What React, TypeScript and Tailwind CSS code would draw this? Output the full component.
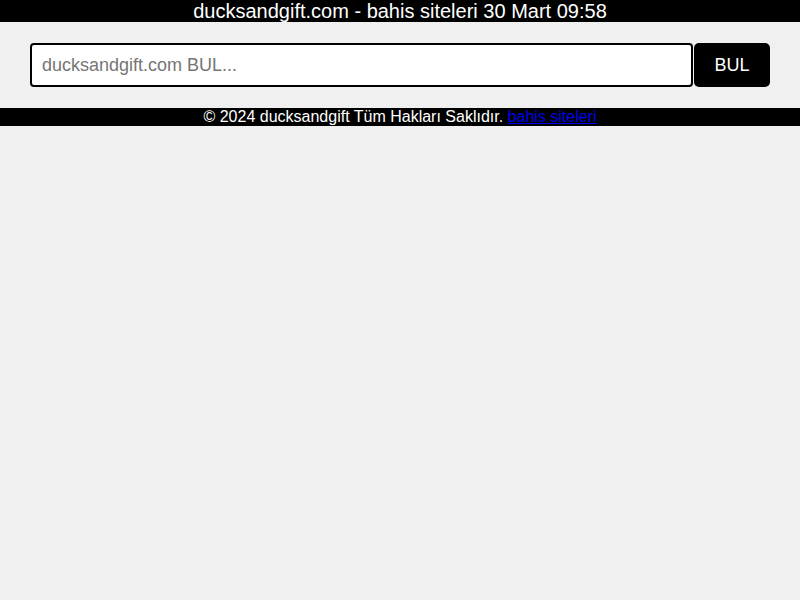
export default function App() {
  return (
    <div className="min-h-[600px] bg-[#f0f0f0] font-['Liberation_Sans',Arial,sans-serif]">
      <header className="bg-black text-white text-center text-[20px] leading-[22px] h-[22px]">
        ducksandgift.com - bahis siteleri 30 Mart 09:58
      </header>

      <form className="flex px-[30px] py-[21px]" onSubmit={(e) => e.preventDefault()}>
        <input
          type="text"
          placeholder="ducksandgift.com BUL..."
          className="flex-1 h-[44px] px-[10px] bg-white border-2 border-black rounded-[4px] text-[18px] text-black placeholder:text-[#757575] outline-none"
        />
        <button
          type="submit"
          className="ml-px w-[76px] h-[44px] bg-black text-white text-[18px] rounded-[5px]"
        >
          BUL
        </button>
      </form>

      <footer className="bg-black text-white text-center text-[16px] leading-[18px] h-[18px]">
        © 2024 ducksandgift Tüm Hakları Saklıdır.{" "}
        <a href="#" className="text-[#0000ee] underline">
          bahis siteleri
        </a>
      </footer>
    </div>
  );
}
